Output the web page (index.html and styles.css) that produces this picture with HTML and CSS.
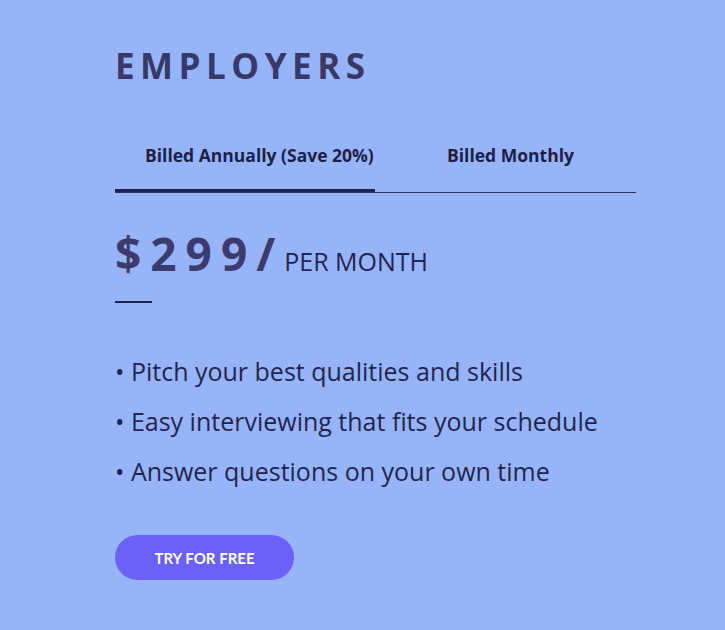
FILE: index.html
```html
<!DOCTYPE html>
<html>
<head>
<meta charset="utf-8">
<link rel="stylesheet" href="styles.css">
</head>
<body>
<main class="card">
  <h1 class="title">EMPLOYERS</h1>
  <div class="tabs">
    <div class="tab tab-active">Billed Annually (Save 20%)</div>
    <div class="tab tab-monthly">Billed Monthly</div>
  </div>
  <div class="price">
    <span class="amount">$299/</span>
    <span class="per">PER MONTH</span>
  </div>
  <div class="dash"></div>
  <ul class="features">
    <li>• Pitch your best qualities and skills</li>
    <li>• Easy interviewing that fits your schedule</li>
    <li>• Answer questions on your own time</li>
  </ul>
  <button class="cta">TRY FOR FREE</button>
</main>
</body>
</html>
```
FILE: styles.css
```css
html, body {
  margin: 0;
  padding: 0;
  background: #98b4f8;
  height: 100%;
}
.card {
  padding: 44px 0 0 115px;
  font-family: "Open Sans", sans-serif;
  width: 521px;
}
.title {
  margin: 0;
  font-size: 35px;
  font-weight: 700;
  letter-spacing: 5.5px;
  color: #38386a;
  line-height: 44px;
}
.tabs {
  display: flex;
  margin-top: 42px;
  border-bottom: 1px solid #2e3463;
}
.tab {
  font-size: 17.5px;
  font-weight: 700;
  color: #1c1f4a;
  height: 62px;
  box-sizing: border-box;
  padding-top: 13px;
  line-height: 24px;
}
.tab-active {
  width: 260px;
  padding-left: 30px;
  border-bottom: 3px solid #1e2352;
  margin-bottom: -1px;
}
.tab-monthly {
  padding-left: 72px;
}
.price {
  display: flex;
  align-items: baseline;
  margin-top: 30px;
  height: 60px;
}
.amount {
  font-size: 46px;
  font-weight: 700;
  letter-spacing: 9px;
  color: #3b3b70;
  line-height: 60px;
}
.per {
  font-size: 25px;
  color: #1f2452;
  margin-left: 0;
}
.dash {
  width: 37px;
  height: 2px;
  background: #1e2352;
  margin-top: 18px;
}
.features {
  list-style: none;
  margin: 43px 0 0 0;
  padding: 0;
}
.features li {
  font-size: 25px;
  line-height: 50px;
  color: #1f2452;
  white-space: nowrap;
}
.cta {
  margin-top: 39px;
  width: 179px;
  height: 45px;
  border: none;
  border-radius: 23px;
  background: #6b61f6;
  color: #ffffff;
  font-family: "Lato", sans-serif;
  font-size: 15px;
  font-weight: 700;
  cursor: pointer;
}
```
